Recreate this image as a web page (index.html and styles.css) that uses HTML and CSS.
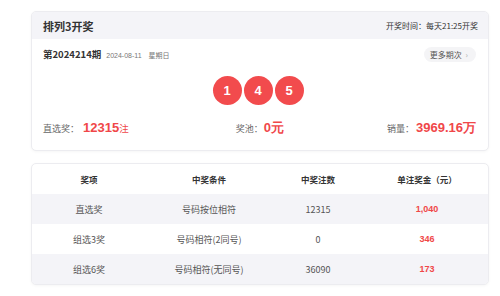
FILE: index.html
```html
<!DOCTYPE html>
<html lang="zh">
<head>
<meta charset="utf-8">
<link rel="stylesheet" href="styles.css">
</head>
<body>
<div class="page">
  <section class="card draw">
    <header class="draw-head">
      <h1 class="title">排列3开奖</h1>
      <span class="time">开奖时间：每天21:25开奖</span>
    </header>
    <div class="draw-body">
      <div class="issue-row">
        <div class="issue">
          <span class="issue-no">第2024214期</span>
          <span class="issue-date">2024-08-11</span>
          <span class="issue-day">星期日</span>
        </div>
        <a class="more">更多期次 <span class="chev">›</span></a>
      </div>
      <div class="balls">
        <span class="ball">1</span>
        <span class="ball">4</span>
        <span class="ball">5</span>
      </div>
      <div class="stats">
        <div class="stat"><span class="label">直选奖：</span><span class="val">12315</span><span class="unit">注</span></div>
        <div class="stat"><span class="label">奖池：</span><span class="val">0元</span></div>
        <div class="stat"><span class="label">销量：</span><span class="val big">3969.16万</span></div>
      </div>
    </div>
  </section>

  <section class="card prizes">
    <table class="prize-table">
      <colgroup>
        <col class="c1"><col class="c2"><col class="c3"><col class="c4">
      </colgroup>
      <thead>
        <tr><th>奖项</th><th>中奖条件</th><th>中奖注数</th><th>单注奖金（元）</th></tr>
      </thead>
      <tbody>
        <tr class="alt"><td>直选奖</td><td>号码按位相符</td><td>12315</td><td class="money">1,040</td></tr>
        <tr><td>组选3奖</td><td>号码相符(2同号)</td><td>0</td><td class="money">346</td></tr>
        <tr class="alt"><td>组选6奖</td><td>号码相符(无同号)</td><td>36090</td><td class="money">173</td></tr>
      </tbody>
    </table>
  </section>
</div>
</body>
</html>
```

FILE: styles.css
```css
* { box-sizing: border-box; }
html, body { margin: 0; padding: 0; background: #fff; }
body {
  font-family: "Noto Sans CJK SC", "Liberation Sans", Arial, sans-serif;
  color: #333;
  width: 500px;
  height: 296px;
  overflow: hidden;
}
.page {
  padding: 11px 11px 0 31px;
  display: flex;
  flex-direction: column;
  gap: 12px;
}
.card {
  width: 458px;
  background: #fff;
  border: 1px solid #ececf0;
  border-radius: 5px;
  box-shadow: 0 1px 3px rgba(0,0,0,0.04);
  overflow: hidden;
}
.draw-head {
  height: 27px;
  background: #f4f4f8;
  display: flex;
  align-items: center;
  justify-content: space-between;
  padding: 0 10px 0 11px;
}
.title {
  margin: 0;
  font-size: 11px;
  font-weight: 700;
  color: #333;
}
.time {
  font-size: 8px;
  color: #333;
}
.draw-body {
  padding: 6px 11px 0 11px;
  height: 111px;
  display: flex;
  flex-direction: column;
}
.issue-row {
  display: flex;
  justify-content: space-between;
  align-items: center;
  height: 18px;
}
.issue { display: flex; align-items: baseline; }
.issue-no {
  font-size: 9.5px;
  font-weight: 700;
  color: #333;
}
.issue-date {
  font-size: 7px;
  color: #777;
  margin-left: 5px;
  font-family: "Liberation Sans", Arial, sans-serif;
}
.issue-day {
  font-size: 7px;
  color: #777;
  margin-left: 7px;
}
.more {
  font-size: 8px;
  color: #555;
  background: #f4f4f6;
  border-radius: 8px;
  height: 15px;
  line-height: 15px;
  padding: 0 8px 0 6px;
  margin-right: 1px;
}
.chev { color: #aaa; margin-left: 2px; }
.balls {
  display: flex;
  justify-content: center;
  gap: 2px;
  margin-top: 13px;
  margin-right: 4px;
}
.ball {
  width: 29px;
  height: 29px;
  border-radius: 50%;
  background: #f24b4d;
  color: #fff;
  font-family: "Liberation Sans", Arial, sans-serif;
  font-weight: 700;
  font-size: 13px;
  display: flex;
  align-items: center;
  justify-content: center;
}
.stats {
  display: flex;
  justify-content: space-between;
  align-items: baseline;
  margin-top: 14px;
  padding-right: 1px;
}
.stat { display: flex; align-items: baseline; }
.label { font-size: 9px; color: #666; }
.val {
  font-family: "Liberation Sans", Arial, sans-serif;
  font-weight: 700;
  font-size: 13px;
  color: #f04749;
  margin-left: 4px;
}
.val.big { font-size: 13px; margin-left: 2px; }
.stat:nth-child(2) { margin-left: 4px; }
.stat:nth-child(2) .val { margin-left: 1px; }
.unit { font-size: 9.5px; color: #f04749; }
.prize-table {
  width: 100%;
  border-collapse: collapse;
  table-layout: fixed;
  font-size: 9px;
}
.c1 { width: 114px; }
.c2 { width: 126px; }
.c3 { width: 92px; }
.c4 { width: 126px; }
.prize-table th {
  height: 30px;
  font-weight: 700;
  color: #333;
  font-size: 8.5px;
  text-align: center;
}
.prize-table td {
  height: 30px;
  text-align: center;
  color: #555;
}
.prize-table tr.alt td { background: #f4f4f8; }
.prize-table td.money {
  color: #f04749;
  font-weight: 700;
  font-family: "Liberation Sans", Arial, sans-serif;
}
```
